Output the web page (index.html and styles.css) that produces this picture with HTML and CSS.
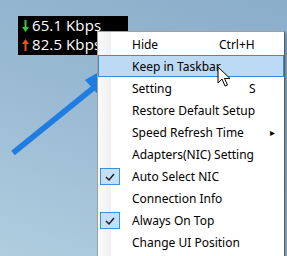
FILE: index.html
```html
<!DOCTYPE html>
<html lang="en">
<head>
  <meta charset="UTF-8">
  <title>Net Speed Menu</title>
  <link rel="stylesheet" href="styles.css">
</head>
<body>
  <div class="desktop">
    <div class="blob"></div>

    <div class="speed">
      <div class="speed-row">
        <svg class="arrow" width="9" height="12" viewBox="0 0 9 12"><path d="M3.5 0 H5.5 V7 H8 L4.5 12 L1 7 H3.5 Z" fill="#3ec43e"/></svg>
        65.1 Kbps
      </div>
      <div class="speed-row">
        <svg class="arrow" width="9" height="12" viewBox="0 0 9 12"><path d="M3.5 12 H5.5 V5 H8 L4.5 0 L1 5 H3.5 Z" fill="#ff4a1a"/></svg>
        82.5 Kbps
      </div>
    </div>

    <svg class="pointer" width="140" height="170" viewBox="0 0 140 170">
      <line x1="13" y1="153" x2="97" y2="85" stroke="#1f7ce0" stroke-width="5.5"/>
      <polygon points="123,58 85,80 104,101" fill="#1f7ce0"/>
    </svg>

    <div class="menu">
      <ul>
        <li><span class="label">Hide</span><span class="key">Ctrl+H</span></li>
        <li class="active"><span class="label">Keep in Taskbar</span></li>
        <li><span class="label">Setting</span><span class="key key-s">S</span></li>
        <li><span class="label">Restore Default Setup</span></li>
        <li><span class="label">Speed Refresh Time</span><span class="sub">&#9656;</span></li>
        <li><span class="label">Adapters(NIC) Setting</span></li>
        <li>
          <span class="check"><svg width="10" height="8" viewBox="0 0 10 8"><path d="M1 4 L4 7 L9 1" fill="none" stroke="#1a1a1a" stroke-width="1.4"/></svg></span>
          <span class="label">Auto Select NIC</span>
        </li>
        <li><span class="label">Connection Info</span></li>
        <li>
          <span class="check"><svg width="10" height="8" viewBox="0 0 10 8"><path d="M1 4 L4 7 L9 1" fill="none" stroke="#1a1a1a" stroke-width="1.4"/></svg></span>
          <span class="label">Always On Top</span>
        </li>
        <li><span class="label">Change UI Position</span></li>
      </ul>
    </div>

    <svg class="cursor" width="14" height="22" viewBox="0 0 14 22">
      <path d="M1 1 L1 17 L5 13 L8 20 L10.5 19 L7.5 12.5 L13 12.5 Z" fill="#fff" stroke="#000" stroke-width="1"/>
    </svg>
  </div>
</body>
</html>
```

FILE: styles.css
```css
body {
  margin: 0;
  font-family: "Noto Sans", "Liberation Sans", sans-serif;
}

.desktop {
  position: relative;
  width: 287px;
  height: 256px;
  overflow: hidden;
  background: linear-gradient(200deg, #8aadca 0%, #98b9d2 45%, #b0cddf 100%);
}

.blob {
  position: absolute;
  left: -228px;
  top: 180px;
  width: 244px;
  height: 300px;
  border-radius: 50%;
  background: #1d4fcf;
  box-shadow: inset -4px 0 0 #1640b0;
}

.speed {
  position: absolute;
  left: 18px;
  top: 16px;
  width: 110px;
  height: 39px;
  background: #000;
  color: #fff;
  font-family: "Open Sans", "Noto Sans", sans-serif;
  font-size: 15px;
  letter-spacing: 0.1px;
  line-height: 19px;
  box-sizing: border-box;
}

.speed-row {
  display: flex;
  align-items: center;
  gap: 2px;
  padding-left: 3px;
}

.arrow {
  flex: none;
}

.pointer {
  position: absolute;
  left: 0;
  top: 0;
}

.menu {
  position: absolute;
  left: 97px;
  top: 31px;
  width: 186px;
  height: 240px;
  background: #fff;
  border: 1px solid #a0a0a0;
  border-right-color: #555f66;
  box-shadow: 2px 2px 2px rgba(40, 60, 80, 0.35);
  padding: 1px 0 0 0;
}

.menu::before {
  content: "";
  position: absolute;
  left: 0;
  top: 0;
  bottom: 0;
  width: 13px;
  background: linear-gradient(90deg, #fafafa, #f0f0f0);
}

.menu ul {
  list-style: none;
  margin: 0;
  padding: 0;
  position: relative;
}

.menu li {
  position: relative;
  display: flex;
  align-items: center;
  height: 22px;
  font-size: 12px;
  color: #000;
  border: 1px solid transparent;
  box-sizing: border-box;
}

.menu li.active {
  background: #bcdaf4;
  border-color: #3a8bd8;
}

.label {
  margin-left: 33px;
}

.key {
  position: absolute;
  left: 120px;
}

.key-s {
  left: 150px;
}

.sub {
  position: absolute;
  left: 171px;
  font-size: 10px;
}

.check {
  position: absolute;
  left: 1px;
  top: 2px;
  width: 18px;
  height: 15px;
  display: flex;
  align-items: center;
  justify-content: center;
  background: #c4e0f7;
  border: 1px solid #3f90d8;
}

.cursor {
  position: absolute;
  left: 217px;
  top: 66px;
}
```
